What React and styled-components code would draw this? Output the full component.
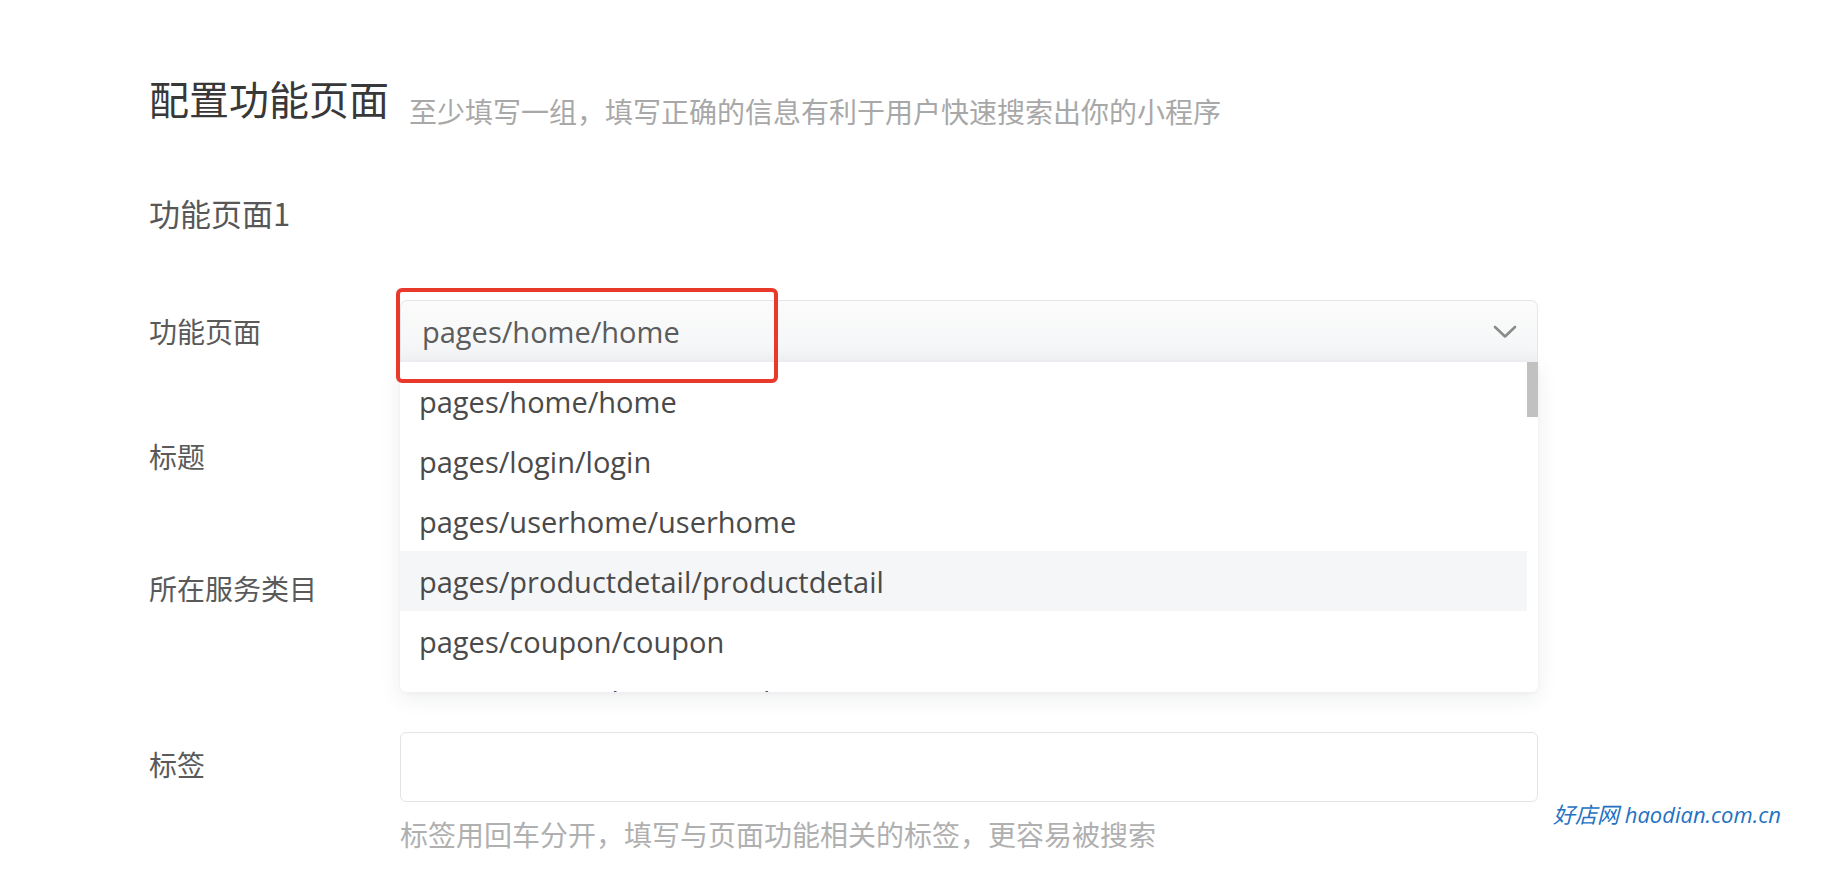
import React from "react";
import styled, { createGlobalStyle } from "styled-components";

const GlobalStyle = createGlobalStyle`
  html, body { margin: 0; padding: 0; background: #ffffff; }
  * { box-sizing: border-box; }
`;

const CJK = `"Noto Sans CJK SC", "Noto Sans", sans-serif`;
const LATIN = `"Open Sans", "Noto Sans CJK SC", sans-serif`;

const Page = styled.div`
  position: relative;
  width: 1830px;
  height: 892px;
  overflow: hidden;
  padding: 78px 0 0 149px;
  background: #ffffff;
`;

const Header = styled.div`
  display: flex;
  align-items: flex-start;
`;

const Title = styled.h1`
  margin: 0;
  font-family: ${CJK};
  font-weight: 400;
  font-size: 40px;
  line-height: 40px;
  color: #383838;
`;

const Subtitle = styled.span`
  margin: 19px 0 0 20px;
  font-family: ${CJK};
  font-size: 28px;
  line-height: 28px;
  color: #a8a8a8;
`;

const SectionTitle = styled.h2`
  margin: 73px 0 0 0;
  font-family: ${CJK};
  font-weight: 400;
  font-size: 31px;
  line-height: 30px;
  color: #575757;
`;

const Form = styled.div`
  display: flex;
  flex-direction: column;
  margin-top: 72px;
  width: 1389px;
`;

const Row = styled.div`
  display: flex;
  align-items: flex-start;
  margin-top: ${(p) => p.$mt || 0}px;
`;

const Label = styled.div`
  flex: 0 0 251px;
  height: ${(p) => p.$h}px;
  display: flex;
  align-items: center;
  padding-bottom: ${(p) => p.$nudge || 0}px;
  font-family: ${CJK};
  font-size: 28px;
  color: #5a5a5a;
`;

const Control = styled.div`
  position: relative;
  flex: 0 0 1138px;
  display: flex;
  flex-direction: column;
`;

const SelectBox = styled.div`
  height: 62px;
  display: flex;
  align-items: center;
  justify-content: space-between;
  padding: 0 20px 0 21px;
  border: 1px solid #e3e7eb;
  border-bottom: none;
  border-radius: 7px 7px 0 0;
  background: linear-gradient(#fbfbfb, #f6f7f8 70%, #f1f2f4);
  font-family: ${LATIN};
  font-size: 29px;
  color: #5c5c5c;
`;

const Chevron = styled.svg`
  width: 24px;
  height: 14px;
  flex: none;
`;

const Dropdown = styled.div`
  position: absolute;
  top: 62px;
  left: 0;
  right: 0;
  height: 330px;
  overflow: hidden;
  padding-top: 9px;
  background: #ffffff;
  border-radius: 0 0 6px 6px;
  box-shadow: 0 6px 22px rgba(30, 40, 60, 0.08), 0 1px 4px rgba(30, 40, 60, 0.04);
  z-index: 2;
`;

const Option = styled.div`
  height: 60px;
  margin-right: 11px;
  display: flex;
  align-items: center;
  padding-left: 19px;
  background: ${(p) => (p.$active ? "#f5f6f8" : "transparent")};
  font-family: ${LATIN};
  font-size: 29px;
  color: #4a4a4a;
  white-space: nowrap;
`;

const ScrollThumb = styled.div`
  position: absolute;
  top: 0;
  right: 0;
  width: 11px;
  height: 55px;
  background: #c1c1c1;
`;

const Highlight = styled.div`
  position: absolute;
  left: -4px;
  top: -12px;
  width: 382px;
  height: 95px;
  border: 4px solid #e8392b;
  border-radius: 6px;
  pointer-events: none;
  z-index: 3;
`;

const TextInput = styled.div`
  height: ${(p) => p.$h}px;
  border: 1px solid #e4e4e4;
  border-radius: 6px;
  background: #ffffff;
`;

const Hint = styled.div`
  margin-top: 18px;
  font-family: ${CJK};
  font-size: 28px;
  line-height: 29px;
  color: #b0b0b0;
`;

const Watermark = styled.div`
  position: absolute;
  left: 1553px;
  top: 803px;
  font-family: ${LATIN};
  font-style: italic;
  font-size: 22px;
  line-height: 22px;
  color: #2472c2;
  white-space: nowrap;
`;

const options = [
  "pages/home/home",
  "pages/login/login",
  "pages/userhome/userhome",
  "pages/productdetail/productdetail",
  "pages/coupon/coupon",
  "pages/couponlist/couponlist",
];

export default function App() {
  return (
    <>
      <GlobalStyle />
      <Page>
        <Header>
          <Title>配置功能页面</Title>
          <Subtitle>至少填写一组，填写正确的信息有利于用户快速搜索出你的小程序</Subtitle>
        </Header>
        <SectionTitle>功能页面1</SectionTitle>
        <Form>
          <Row>
            <Label $h={62}>功能页面</Label>
            <Control>
              <SelectBox>
                <span>pages/home/home</span>
                <Chevron viewBox="0 0 24 14">
                  <polyline
                    points="2,2 12,11.5 22,2"
                    fill="none"
                    stroke="#8a8a8a"
                    strokeWidth="2.6"
                    strokeLinecap="round"
                    strokeLinejoin="round"
                  />
                </Chevron>
              </SelectBox>
              <Dropdown>
                {options.map((o, i) => (
                  <Option key={o} $active={i === 3}>
                    {o}
                  </Option>
                ))}
                <ScrollThumb />
              </Dropdown>
              <Highlight />
            </Control>
          </Row>
          <Row $mt={63}>
            <Label $h={62}>标题</Label>
            <Control>
              <TextInput $h={62} />
            </Control>
          </Row>
          <Row $mt={70}>
            <Label $h={62}>所在服务类目</Label>
            <Control>
              <TextInput $h={62} />
            </Control>
          </Row>
          <Row $mt={113}>
            <Label $h={70} $nudge={6}>标签</Label>
            <Control>
              <TextInput $h={70} />
              <Hint>标签用回车分开，填写与页面功能相关的标签，更容易被搜索</Hint>
            </Control>
          </Row>
        </Form>
        <Watermark>好店网 haodian.com.cn</Watermark>
      </Page>
    </>
  );
}
